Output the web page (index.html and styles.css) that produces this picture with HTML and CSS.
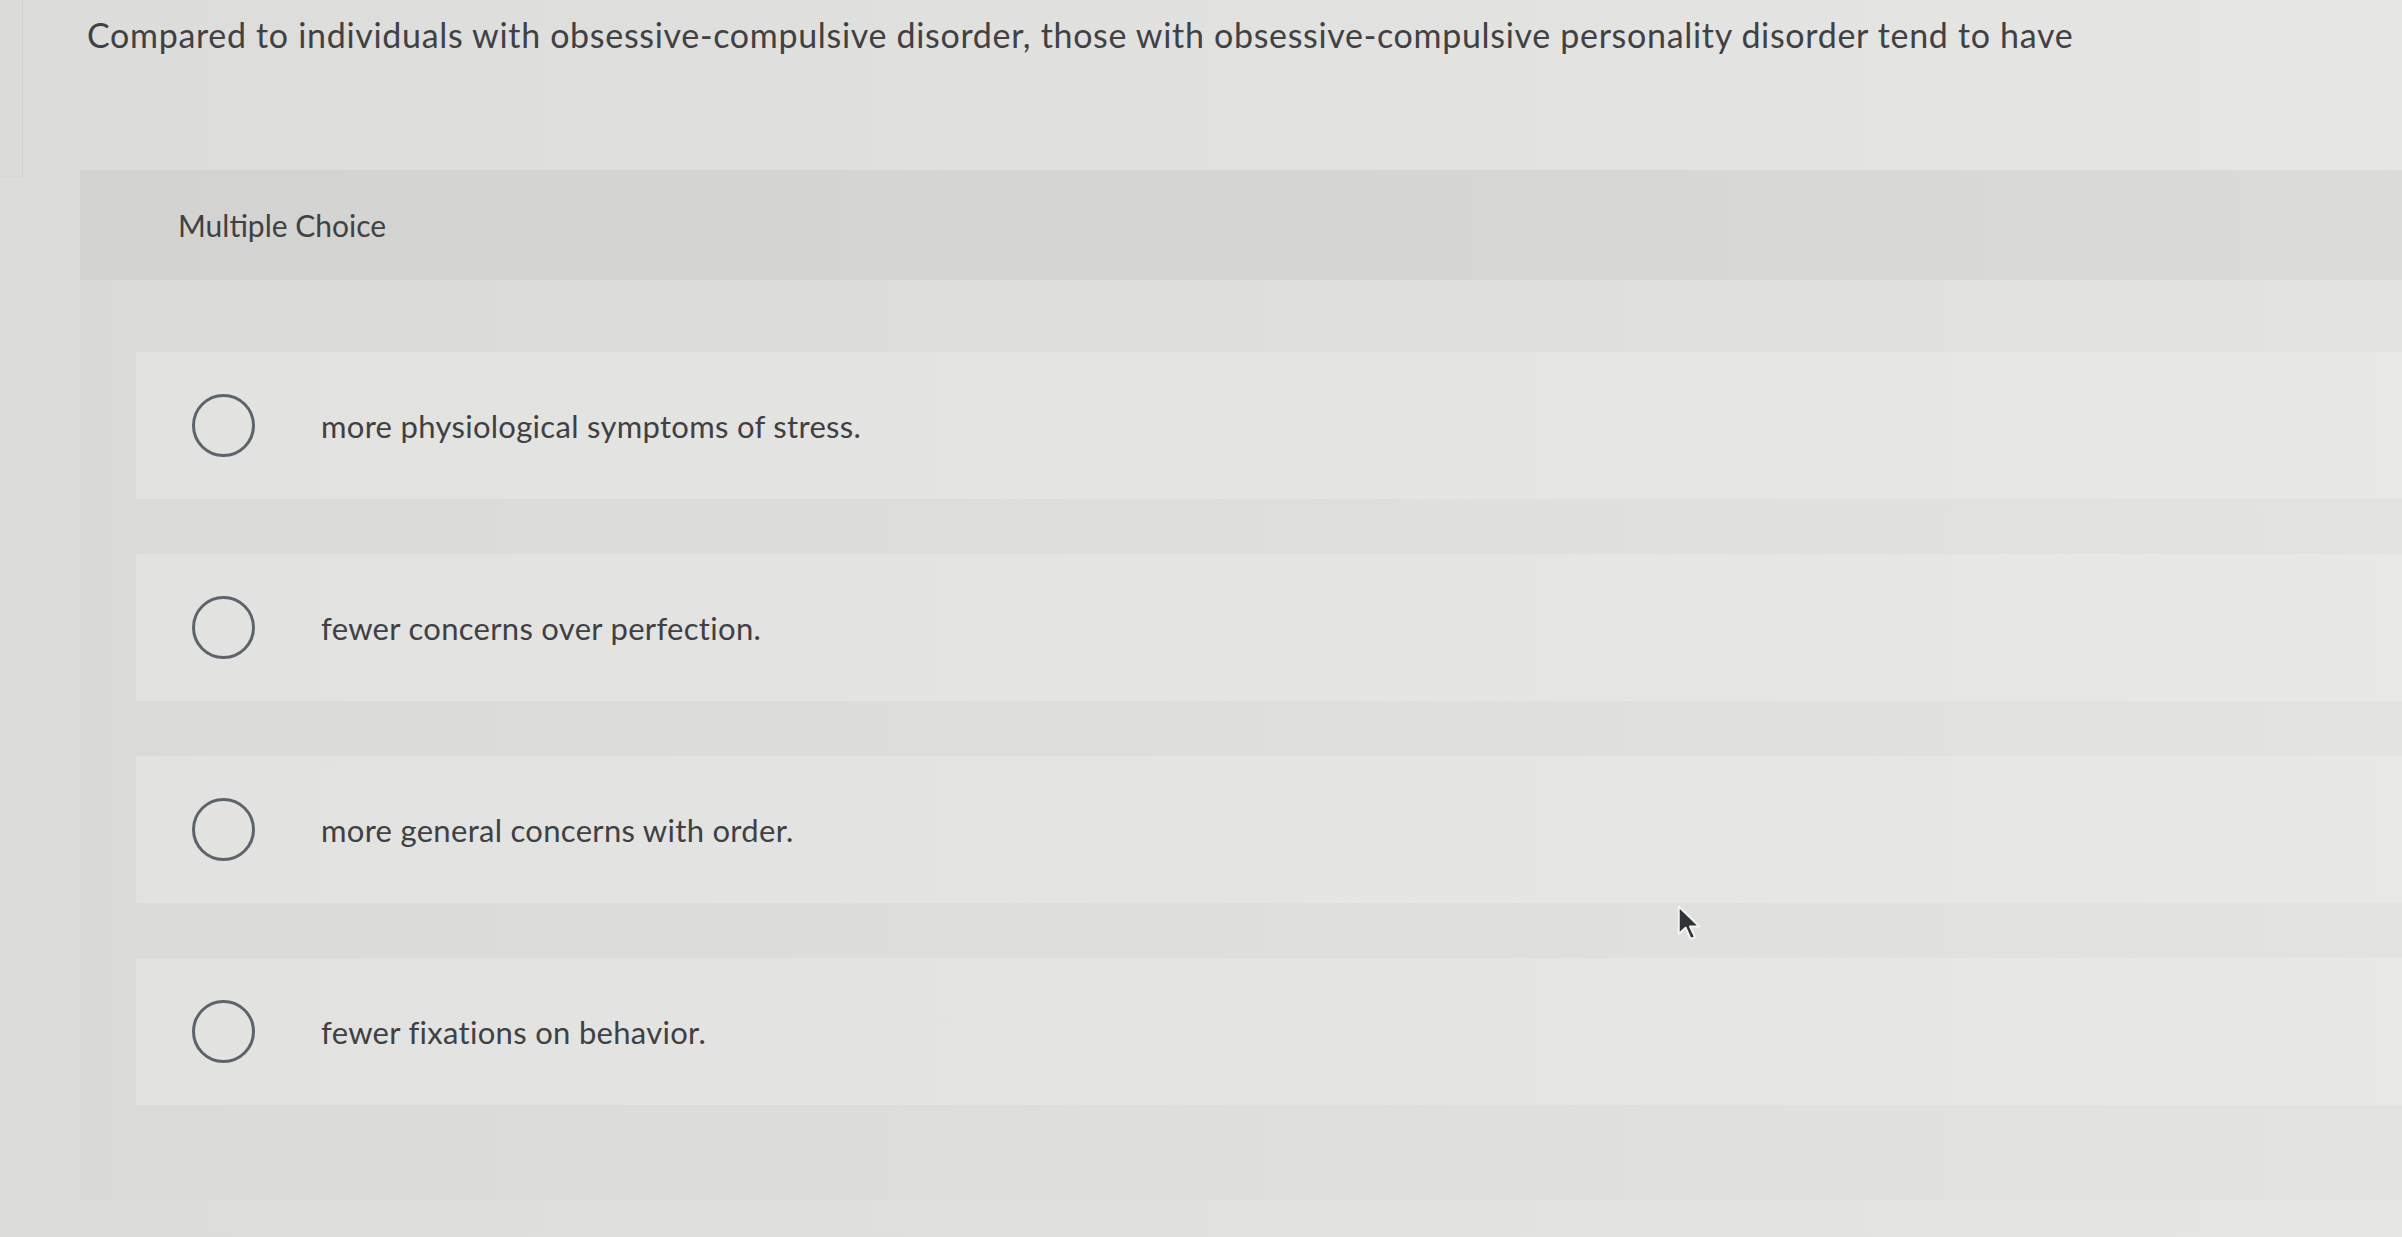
FILE: index.html
```html
<!DOCTYPE html>
<html lang="en">
<head>
<meta charset="utf-8">
<title>Multiple Choice</title>
<link rel="stylesheet" href="styles.css">
</head>
<body>
<div class="top">
  <div class="rail"></div>
  <p class="question">Compared to individuals with obsessive-compulsive disorder, those with obsessive-compulsive personality disorder tend to have</p>
</div>
<section class="card">
  <div class="card-head">Multiple Choice</div>
  <div class="options">
    <label class="option"><span class="radio"></span><span class="opt-text">more physiological symptoms of stress.</span></label>
    <label class="option"><span class="radio"></span><span class="opt-text">fewer concerns over perfection.</span></label>
    <label class="option"><span class="radio"></span><span class="opt-text">more general concerns with order.</span></label>
    <label class="option"><span class="radio"></span><span class="opt-text">fewer fixations on behavior.</span></label>
  </div>
</section>
<svg class="cursor" width="28" height="40" viewBox="0 0 22 32"><path d="M2 2 L2 24 L7.5 19 L11.5 28 L15 26.5 L11 18 L18.5 18 Z" fill="#2f3236" stroke="#f4f4f4" stroke-width="1.6" stroke-linejoin="round"/></svg>
</body>
</html>
```

FILE: styles.css
```css
html, body {
  margin: 0;
  padding: 0;
}
body {
  width: 2402px;
  height: 1237px;
  overflow: hidden;
  position: relative;
  background: linear-gradient(90deg, #dcdcda 0%, #e1e1df 50%, #e6e6e4 100%);
  font-family: Lato, "Open Sans", sans-serif;
  color: #404043;
}
.top {
  display: flex;
  height: 170px;
}
.rail {
  width: 22px;
  height: 176px;
  flex: none;
  background: #dbdbd9;
  border-right: 1px solid #d0d0ce;
  border-bottom: 1px solid #d6d6d4;
}
.question {
  margin: 0;
  padding: 15px 0 0 64px;
  font-size: 34px;
  line-height: 40px;
  letter-spacing: 0.68px;
  color: #414144;
}
.card {
  margin-left: 80px;
  height: 1030px;
  background: linear-gradient(90deg, #dadad8 0%, #dfdfdd 60%, #e3e3e1 100%);
}
.card-head {
  height: 110px;
  display: flex;
  align-items: center;
  padding-left: 98px;
  font-size: 30px;
  color: #414144;
  background: linear-gradient(90deg, #d3d3d1 0%, #d6d6d4 60%, #dbdbd9 100%);
}
.options {
  display: flex;
  flex-direction: column;
  gap: 55px;
  padding: 72px 0 0 56px;
}
.option {
  height: 147px;
  display: flex;
  align-items: center;
  padding-left: 56px;
  background: linear-gradient(90deg, #e2e2e0 0%, #e5e5e3 60%, #e8e8e6 100%);
}
.radio {
  width: 57px;
  height: 57px;
  flex: none;
  border: 3px solid #5d636d;
  border-radius: 50%;
  margin-right: 66px;
}
.opt-text {
  font-size: 31px;
  letter-spacing: 0.3px;
  color: #404043;
}
.cursor {
  position: absolute;
  left: 1676px;
  top: 904px;
}
```
